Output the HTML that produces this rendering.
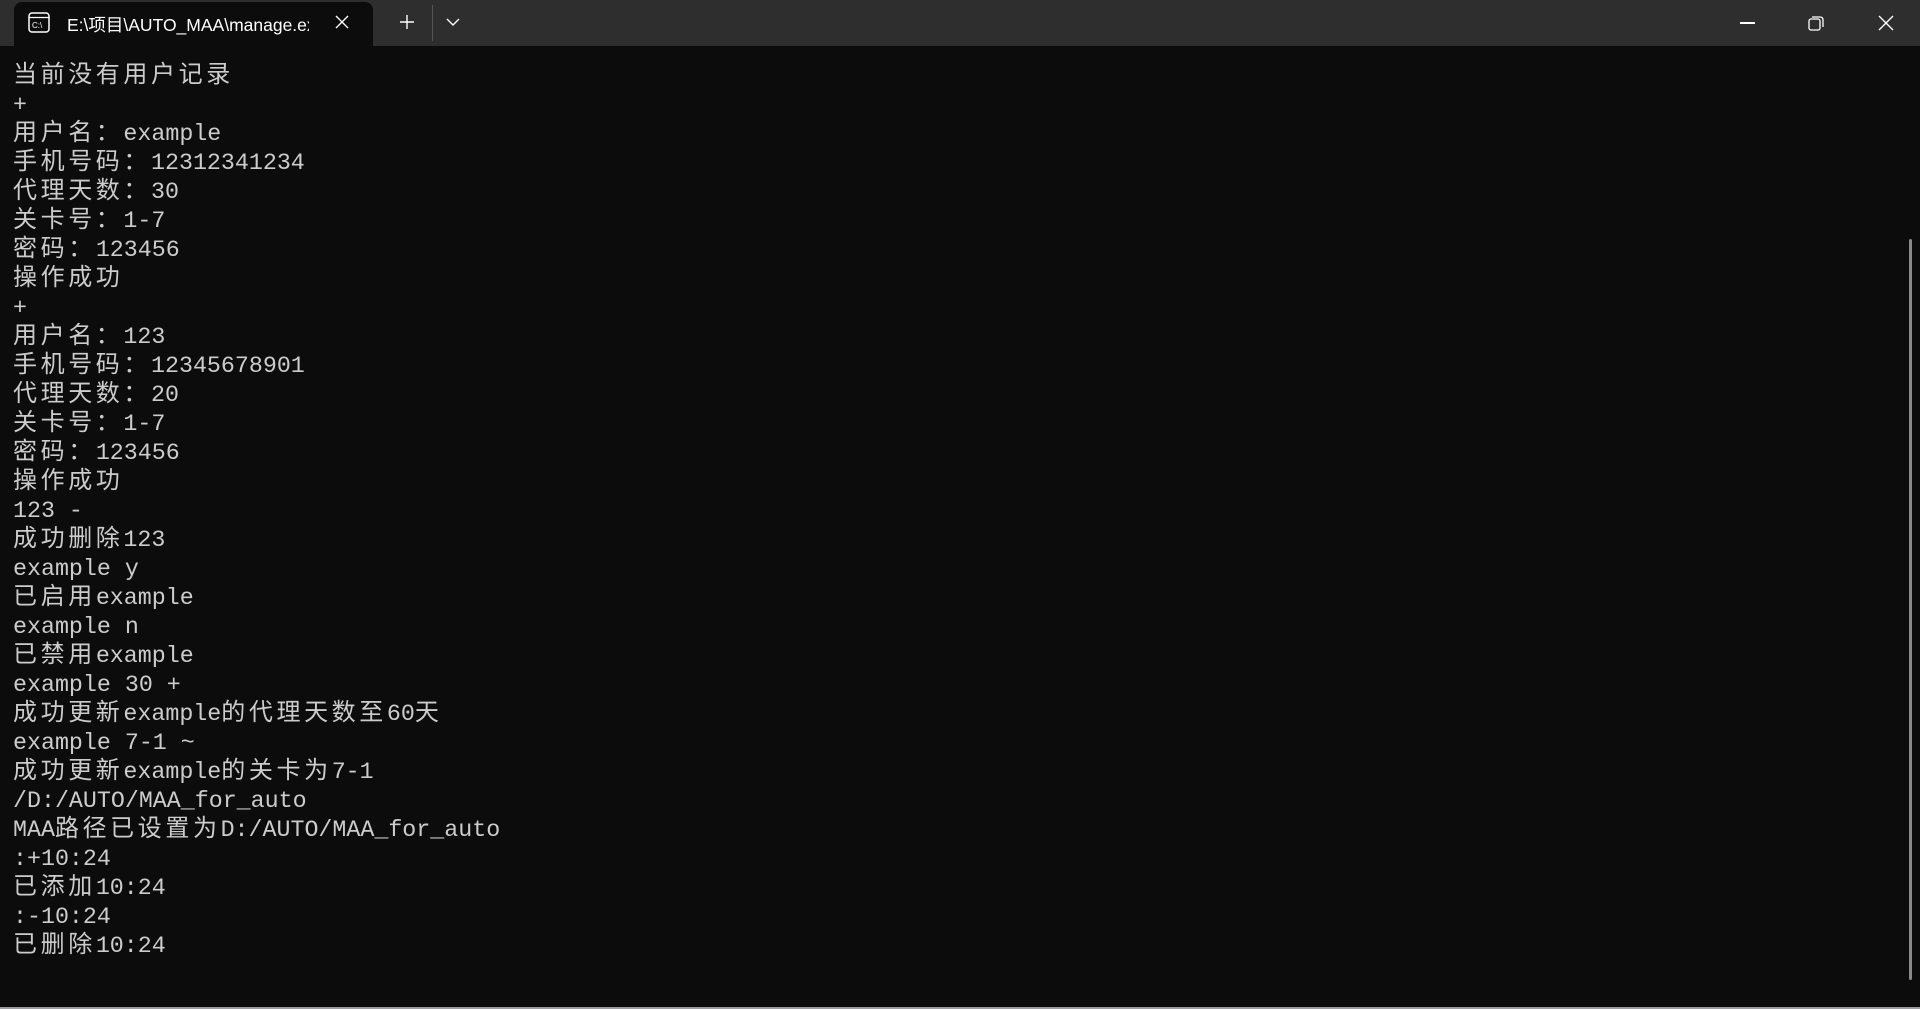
<!DOCTYPE html>
<html><head><meta charset="utf-8"><style>
html,body{margin:0;padding:0;width:1920px;height:1009px;overflow:hidden;background:#0c0c0c}
.tb{position:absolute;left:0;top:0;width:1920px;height:46px;background:#2e2e2e}
.tab{position:absolute;left:14px;top:2px;width:359px;height:44px;background:#0c0c0c;border-radius:8px 8px 0 0}
.tt{position:absolute;left:67px;top:12px;width:242px;overflow:hidden;white-space:nowrap;color:#fff;font:17.5px "Liberation Sans","Noto Sans CJK SC",sans-serif}
.con{position:absolute;left:13px;top:62px;color:#cccccc;font:23.3px "Liberation Mono","Noto Sans CJK SC",monospace}
.con div{height:29px;line-height:29px;overflow:visible;white-space:pre}
.c{font-family:"Noto Sans CJK SC",sans-serif;font-size:24px;letter-spacing:3.6px;line-height:0;vertical-align:baseline}
.sb{position:absolute;left:1909px;top:239px;width:3px;height:741px;background:#8a8a8a;border-radius:2px}
.bot{position:absolute;left:0;top:1007px;width:1920px;height:2px;background:#9a9ea3}
</style></head><body>
<div class="tb"></div>
<div class="tab"></div>
<svg style="position:absolute;left:28px;top:12px" width="24" height="22" viewBox="0 0 24 22"><rect x="1" y="1" width="20" height="19" rx="3" fill="none" stroke="#fff" stroke-width="1.5"/><line x1="1" y1="5.5" x2="21" y2="5.5" stroke="#fff" stroke-width="1.3"/><text x="4" y="16" fill="#fff" font-size="8" font-family="Liberation Sans">C:\</text></svg>
<div class="tt">E:\项目\AUTO_MAA\manage.exe</div>
<svg style="position:absolute;left:335px;top:15px" width="14" height="14"><path d="M1 1L13 13M13 1L1 13" stroke="#fff" stroke-width="1.4"/></svg>
<svg style="position:absolute;left:400px;top:15px" width="14" height="14"><path d="M7 0V14M0 7H14" stroke="#fff" stroke-width="1.4"/></svg>
<div style="position:absolute;left:432px;top:5px;width:1px;height:36px;background:#555"></div>
<svg style="position:absolute;left:446px;top:18px" width="14" height="9"><path d="M1 1L7 7L13 1" fill="none" stroke="#fff" stroke-width="1.4"/></svg>
<div style="position:absolute;left:1740px;top:22px;width:15px;height:1.5px;background:#fff"></div>
<svg style="position:absolute;left:1808px;top:15px" width="16" height="16"><rect x="1" y="4" width="11" height="11" rx="2" fill="none" stroke="#fff" stroke-width="1.3"/><path d="M4 2H12Q15 2 15 5V12" fill="none" stroke="#fff" stroke-width="1.3"/></svg>
<svg style="position:absolute;left:1878px;top:15px" width="16" height="16"><path d="M1 1L15 15M15 1L1 15" stroke="#fff" stroke-width="1.4"/></svg>
<div class="con"><div><span class="c">当前没有用户记录</span></div><div>+</div><div><span class="c">用户名：</span>example</div><div><span class="c">手机号码：</span>12312341234</div><div><span class="c">代理天数：</span>30</div><div><span class="c">关卡号：</span>1-7</div><div><span class="c">密码：</span>123456</div><div><span class="c">操作成功</span></div><div>+</div><div><span class="c">用户名：</span>123</div><div><span class="c">手机号码：</span>12345678901</div><div><span class="c">代理天数：</span>20</div><div><span class="c">关卡号：</span>1-7</div><div><span class="c">密码：</span>123456</div><div><span class="c">操作成功</span></div><div>123 -</div><div><span class="c">成功删除</span>123</div><div>example y</div><div><span class="c">已启用</span>example</div><div>example n</div><div><span class="c">已禁用</span>example</div><div>example 30 +</div><div><span class="c">成功更新</span>example<span class="c">的代理天数至</span>60<span class="c">天</span></div><div>example 7-1 ~</div><div><span class="c">成功更新</span>example<span class="c">的关卡为</span>7-1</div><div>/D:/AUTO/MAA_for_auto</div><div>MAA<span class="c">路径已设置为</span>D:/AUTO/MAA_for_auto</div><div>:+10:24</div><div><span class="c">已添加</span>10:24</div><div>:-10:24</div><div><span class="c">已删除</span>10:24</div></div>
<div class="sb"></div>
<div class="bot"></div>
</body></html>
